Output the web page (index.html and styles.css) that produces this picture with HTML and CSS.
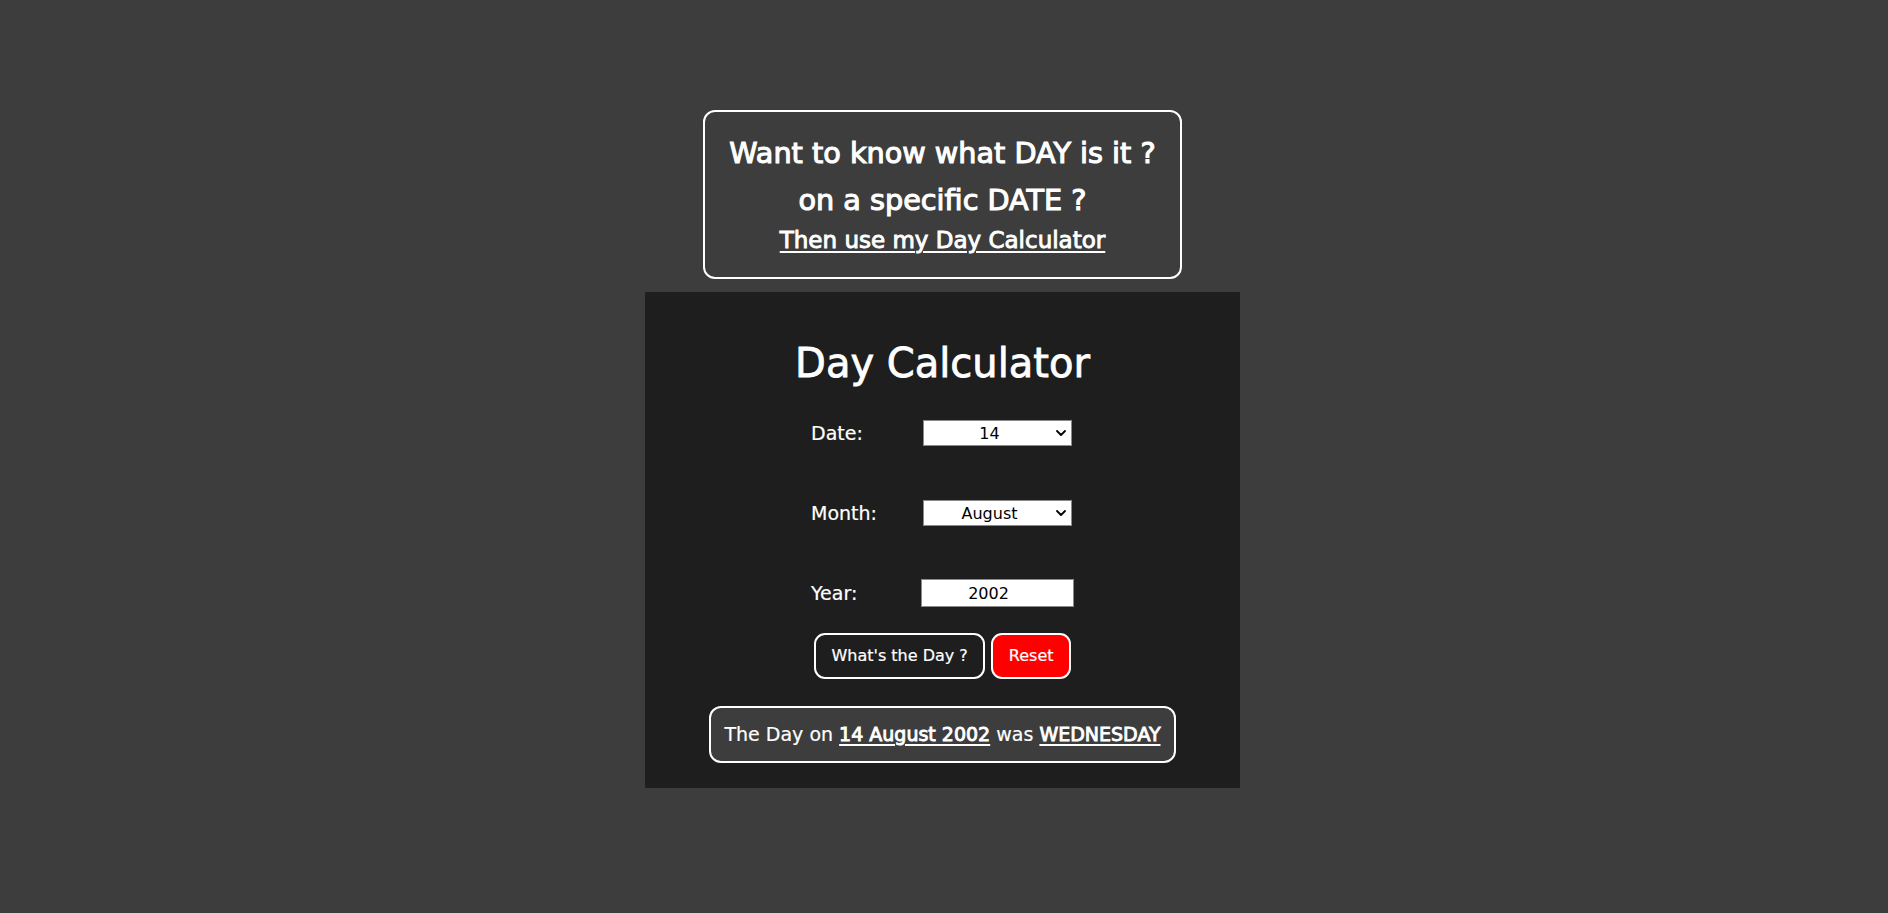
FILE: index.html
```html
<!DOCTYPE html>
<html lang="en">
<head>
<meta charset="utf-8">
<title>Day Calculator</title>
<link rel="stylesheet" href="styles.css">
</head>
<body>
<main class="page">
  <section class="intro">
    <h2 class="intro-line">Want to know what DAY is it ?</h2>
    <h2 class="intro-line">on a specific DATE ?</h2>
    <h3 class="intro-link">Then use my Day Calculator</h3>
  </section>

  <section class="calc">
    <h1 class="calc-title">Day Calculator</h1>
    <div class="form">
      <label class="label" for="date">Date:</label>
      <div class="select-wrap">
        <select id="date" class="select">
          <option>14</option>
        </select>
        <svg class="chev" width="10" height="6" viewBox="0 0 10 6" aria-hidden="true"><path d="M1 1l4 4 4-4" fill="none" stroke="#000" stroke-width="1.8" stroke-linecap="round" stroke-linejoin="round"/></svg>
      </div>

      <label class="label" for="month">Month:</label>
      <div class="select-wrap">
        <select id="month" class="select">
          <option>August</option>
        </select>
        <svg class="chev" width="10" height="6" viewBox="0 0 10 6" aria-hidden="true"><path d="M1 1l4 4 4-4" fill="none" stroke="#000" stroke-width="1.8" stroke-linecap="round" stroke-linejoin="round"/></svg>
      </div>

      <label class="label" for="year">Year:</label>
      <input id="year" class="year" type="text" value="2002">
    </div>

    <div class="actions">
      <button class="btn">What's the Day ?</button>
      <button class="btn btn-reset">Reset</button>
    </div>

    <div class="result">The Day on <span class="em">14 August 2002</span> was <span class="em">WEDNESDAY</span></div>
  </section>
</main>
</body>
</html>
```

FILE: styles.css
```css
* { box-sizing: border-box; }

html, body {
  margin: 0;
  padding: 0;
  background: #3d3d3d;
  color: #ffffff;
  font-family: "DejaVu Sans", "Liberation Sans", sans-serif;
}

.page {
  display: flex;
  flex-direction: column;
  align-items: center;
  padding: 110px 3px 0 0;
  gap: 13px;
  min-height: 913px;
}

.intro {
  width: fit-content;
  border: 2px solid #ffffff;
  border-radius: 12px;
  padding: 17.5px 24px 20.5px;
  text-align: center;
}

.intro-line {
  margin: 0;
  font-size: 28.7px;
  font-weight: 400;
  line-height: 47px;
  -webkit-text-stroke: 1.1px #ffffff;
  white-space: nowrap;
}

.intro-link {
  margin: 0;
  font-size: 23px;
  font-weight: 400;
  line-height: 33px;
  text-decoration: underline;
  text-decoration-thickness: 2px;
  text-underline-offset: 3px;
  -webkit-text-stroke: 0.9px #ffffff;
  white-space: nowrap;
}

.calc {
  width: 595px;
  background: #1e1e1e;
  padding: 43px 0 25px;
  display: flex;
  flex-direction: column;
  align-items: center;
}

.calc-title {
  margin: 0;
  font-size: 40px;
  font-weight: 400;
  line-height: 56px;
  -webkit-text-stroke: 0.8px #ffffff;
}

.form {
  margin-top: 28px;
  display: grid;
  grid-template-columns: 110px 153px;
  grid-auto-rows: 28px;
  row-gap: 52px;
  align-items: center;
}

.label {
  font-size: 19px;
  line-height: 28px;
  -webkit-text-stroke: 0.2px #ffffff;
}

.select-wrap {
  position: relative;
  width: 149px;
  height: 26px;
  justify-self: center;
}

.select {
  -webkit-appearance: none;
  appearance: none;
  width: 100%;
  height: 26px;
  margin: 0;
  border: 1px solid #8a8a8a;
  border-radius: 0;
  background: #ffffff;
  color: #000000;
  font-family: "DejaVu Sans", sans-serif;
  font-size: 16px;
  text-align: center;
  text-align-last: center;
  padding: 0 16px 0 0;
}

.chev {
  position: absolute;
  right: 6px;
  top: 10px;
  pointer-events: none;
}

.year {
  width: 153px;
  height: 28px;
  margin: 0;
  border: 1px solid #8a8a8a;
  border-radius: 0;
  background: #ffffff;
  color: #000000;
  font-family: "DejaVu Sans", sans-serif;
  font-size: 16px;
  text-align: center;
  padding: 0 18px 0 0;
}

.actions {
  margin-top: 25.5px;
  display: flex;
  gap: 6px;
}

.btn {
  height: 46px;
  padding: 0 15.5px;
  border: 2px solid #ffffff;
  border-radius: 11px;
  background: transparent;
  color: #ffffff;
  font-family: "DejaVu Sans", sans-serif;
  font-size: 16px;
  -webkit-text-stroke: 0.2px #ffffff;
}

.btn-reset {
  background: #ff0000;
}

.result {
  margin-top: 27px;
  height: 57px;
  padding: 0 13.5px;
  border: 2px solid #ffffff;
  border-radius: 12px;
  background: #3d3d3d;
  font-size: 19px;
  line-height: 53px;
  white-space: nowrap;
  -webkit-text-stroke: 0.2px #ffffff;
}

.em {
  text-decoration: underline;
  text-decoration-thickness: 2px;
  text-underline-offset: 3px;
  -webkit-text-stroke: 0.9px #ffffff;
}
```
